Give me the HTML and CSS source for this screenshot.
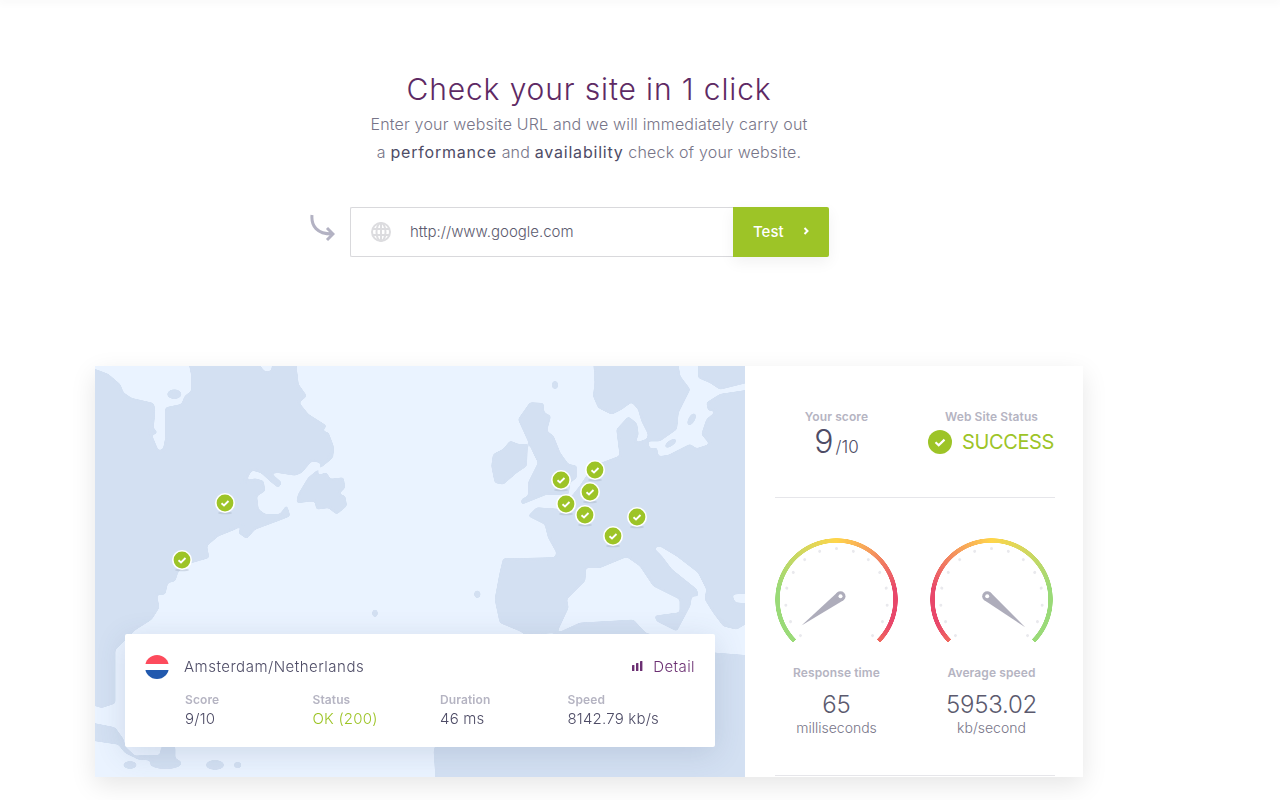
FILE: index.html
```html
<!DOCTYPE html>
<html lang="en">
<head>
    <meta charset="UTF-8">
    <meta name="viewport" content="width=device-width, initial-scale=1.0">
    <title>Check your site in 1 click</title>
    <link rel="stylesheet" href="styles.css">
</head>
<body>

<div class="top-edge"></div>

<div class="container">
    <h1>Check your site in 1 click</h1>
    <p class="intro">Enter your website URL and we will immediately carry out<br>a <strong>performance</strong> and <strong>availability</strong> check of your website.</p>

    <form class="search">
        <svg class="search-arrow" width="26" height="28" viewBox="0 0 26 28">
            <path d="M3 1C2 12 8 20 23 20M18 14l6 6-6 6" fill="none" stroke="#b3b2c3" stroke-width="3"/>
        </svg>
        <div class="search-box">
            <div class="search-field">
                <svg width="20" height="20" viewBox="0 0 20 20" fill="none" stroke="#dcdcdf" stroke-width="2">
                    <circle cx="10" cy="10" r="9"/>
                    <ellipse cx="10" cy="10" rx="4.5" ry="9"/>
                    <path d="M10 1v18M1.5 7h17M1.5 13h17"/>
                </svg>
                <input type="text" value="http://www.google.com">
            </div>
            <button type="button">Test
                <svg width="6" height="8" viewBox="0 0 6 8" fill="none" stroke="#fff" stroke-width="2"><path d="M1.5 1l3 3-3 3"/></svg>
            </button>
        </div>
    </form>

    <svg width="0" height="0" class="defs">
        <defs>
            <filter id="soften">
                <feGaussianBlur stdDeviation="1.6"/>
                <feComponentTransfer>
                    <feFuncA type="linear" slope="8" intercept="-3.5"/>
                </feComponentTransfer>
            </filter>
            <symbol id="pin" viewBox="0 0 22 22" overflow="visible">
                <ellipse cx="11" cy="21" rx="7" ry="1.3" fill="#9aa6b8" opacity=".35"/>
                <circle cx="11" cy="11" r="10" fill="#fff"/>
                <circle cx="11" cy="11" r="8.4" fill="#9dc427"/>
                <path d="M7.5 11.2l2.5 2.2 4.5-4.4" fill="none" stroke="#fff" stroke-width="1.9"/>
            </symbol>
            <symbol id="ticks" viewBox="-61.5 -61.5 123 123">
                <g fill="#e9e9ed">
                    <circle cy="-51" r="1.5" transform="rotate(-135)"/>
                    <circle cy="-51" r="1.5" transform="rotate(-115.7)"/>
                    <circle cy="-51" r="1.5" transform="rotate(-96.4)"/>
                    <circle cy="-51" r="1.5" transform="rotate(-77.1)"/>
                    <circle cy="-51" r="1.5" transform="rotate(-57.9)"/>
                    <circle cy="-51" r="1.5" transform="rotate(-38.6)"/>
                    <circle cy="-51" r="1.5" transform="rotate(-19.3)"/>
                    <circle cy="-51" r="1.5"/>
                    <circle cy="-51" r="1.5" transform="rotate(19.3)"/>
                    <circle cy="-51" r="1.5" transform="rotate(38.6)"/>
                    <circle cy="-51" r="1.5" transform="rotate(57.9)"/>
                    <circle cy="-51" r="1.5" transform="rotate(77.1)"/>
                    <circle cy="-51" r="1.5" transform="rotate(96.4)"/>
                    <circle cy="-51" r="1.5" transform="rotate(115.7)"/>
                    <circle cy="-51" r="1.5" transform="rotate(135)"/>
                </g>
            </symbol>
        </defs>
    </svg>

    <div class="card">
        <div class="map">
            <svg class="map-art" width="650" height="411" viewBox="0 0 650 411">
                <g class="land" filter="url(#soften)">
                    <!-- north america, drawn at 3x -->
                    <g transform="scale(.3333)">
                        <path d="M-30 5L0 10 40 25 75 55 85 80 110 97 175 112 180 130 175 190 165 195 190 255 205 250 212 215 212 125 260 115 270 90 290 75 290 30 278 -30 495 -30 495 0 510 18 530 15 535 -30 600 -30 610 55 635 90 612 110 640 145 695 180 680 195 700 200 715 240 715 265 680 290 650 285 620 320 600 328 550 320 505 322 470 312 455 340 425 352 480 338 505 345 510 375 485 390 490 430 510 445 555 445 575 418 585 450 555 462 480 490 455 518 430 500 445 475 420 490 370 510 335 540 342 575 290 590 250 615 240 645 218 650 210 685 185 685 192 725 170 760 120 792 60 852 60 1012 20 1025 -30 1010Z"/>
                        <path d="M500 322L535 328 560 350 550 365 525 345Z"/>
                        <path d="M680 288L720 270 640 335 610 385 605 410 660 405 665 430 700 425 725 445 755 420 750 390 730 385 750 365 745 335 705 340 695 320 665 330Z"/>
                        <ellipse cx="238" cy="85" rx="22" ry="15"/>
                        <circle cx="178" cy="198" r="8"/>
                        <ellipse cx="840" cy="742" rx="9" ry="12"/>
                        <path d="M-30 1067L60 1085 85 1120 90 1142 120 1170 195 1168 200 1142 240 1142 240 1180 200 1185 130 1180 90 1160 70 1135 -30 1120Z"/>
                        <ellipse cx="105" cy="1197" rx="21" ry="12"/>
                        <ellipse cx="212" cy="1192" rx="48" ry="18"/>
                        <ellipse cx="360" cy="1197" rx="28" ry="15"/>
                        <ellipse cx="428" cy="1197" rx="12" ry="10"/>
                        <ellipse cx="460" cy="1233" rx="5" ry="4"/>
                    </g>
                    <!-- europe, drawn at 3x -->
                    <g transform="translate(325 0) scale(.3333)">
                        <path d="M520 -30L525 50 520 90 535 125 575 145 605 130 635 108 655 130 665 165 685 205 680 225 720 225 770 190 775 140 810 70 780 30 770 -30Z"/>
                        <path d="M835 -30L1000 -30 1000 45 900 70 870 50 835 35Z"/>
                        <path d="M600 270L590 190 625 152 650 172 655 205 645 232 680 220 690 250 710 245 715 272 745 268 810 235 830 248 870 235 845 205 860 160 890 135 865 133 860 110 900 85 1000 70 1000 680 935 685 945 710 1000 715 1000 760 950 790 910 780 880 740 855 700 860 670 835 620 770 570 720 540 700 545 725 570 755 610 830 670 835 690 815 690 810 720 770 795 710 765 705 750 780 740 780 700 700 660 660 600 620 572 540 605 497 605 495 645 440 700 445 725 410 800 315 805 300 795 240 770 225 700 240 620 250 578 405 575 410 560 385 515 375 475 325 450 350 425 420 430 460 385 480 360 520 300 560 285Z"/>
                        <path d="M330 110L370 112 372 140 392 150 380 195 400 210 420 260 445 295 470 300 470 335 450 350 445 385 380 385 305 415 305 400 325 390 325 350 355 290 340 260 320 215 295 160Z"/>
                        <path d="M220 265L250 250 270 225 295 235 322 235 320 300 290 320 250 355 225 350 215 300Z"/>
                        <ellipse cx="405" cy="57" rx="10" ry="13"/>
                        <ellipse cx="172" cy="685" rx="10" ry="12"/>
                        <ellipse cx="815" cy="160" rx="10" ry="21" transform="rotate(30 815 160)"/>
                        <ellipse cx="752" cy="232" rx="21" ry="9" transform="rotate(-35 752 232)"/>
                        <path d="M415 805L480 775 640 765 675 805Z"/>
                    </g>
                    <path d="M463 268L485 258 538 255 550 268 620 288 670 292 670 430 343 430 340 385 345 370Z"/>
                </g>
                <use href="#pin" x="119" y="126" width="22" height="22"/>
                <use href="#pin" x="76" y="183" width="22" height="22"/>
                <use href="#pin" x="455" y="103" width="22" height="22"/>
                <use href="#pin" x="489" y="93" width="22" height="22"/>
                <use href="#pin" x="484" y="115" width="22" height="22"/>
                <use href="#pin" x="460" y="127" width="22" height="22"/>
                <use href="#pin" x="479" y="138" width="22" height="22"/>
                <use href="#pin" x="531" y="140" width="22" height="22"/>
                <use href="#pin" x="507" y="159" width="22" height="22"/>
            </svg>

            <div class="location">
                <div class="location-head">
                    <span class="flag"></span>
                    <span class="location-name">Amsterdam/Netherlands</span>
                    <a class="detail" href="#">
                        <svg width="11" height="10" viewBox="0 0 11 10" fill="#6b2f72"><rect y="4" width="2.4" height="6" rx=".6"/><rect x="4" y="2" width="2.4" height="8" rx=".6"/><rect x="8" width="2.4" height="10" rx=".6"/></svg>
                        Detail
                    </a>
                </div>
                <div class="location-stats">
                    <div><span class="label">Score</span><span class="val">9/10</span></div>
                    <div><span class="label">Status</span><span class="val ok">OK (200)</span></div>
                    <div><span class="label">Duration</span><span class="val">46 ms</span></div>
                    <div><span class="label">Speed</span><span class="val">8142.79 kb/s</span></div>
                </div>
            </div>
        </div>

        <div class="side">
            <div class="summary">
                <div class="summary-col">
                    <span class="label">Your score</span>
                    <div class="score"><b>9</b>/10</div>
                </div>
                <div class="summary-col">
                    <span class="label">Web Site Status</span>
                    <div class="status">
                        <svg width="24" height="24" viewBox="0 0 24 24"><circle cx="12" cy="12" r="12" fill="#9dc427"/><path d="M7.5 12.2l3.2 3 5.8-5.6" fill="none" stroke="#fff" stroke-width="2.2"/></svg>
                        SUCCESS
                    </div>
                </div>
            </div>
            <div class="rule"></div>
            <div class="metrics">
                <div class="metric">
                    <div class="gauge gauge-time">
                        <svg viewBox="-61.5 -61.5 123 123">
                            <use href="#ticks" x="-61.5" y="-61.5" width="123" height="123"/>
                            <polygon points="-35,26 7,0.7 1,-7.3" fill="#aeadbb"/>
                            <circle cx="4" cy="-3.3" r="5" fill="#aeadbb"/>
                            <circle cx="4" cy="-3.3" r="2" fill="#fff"/>
                        </svg>
                    </div>
                    <span class="label">Response time</span>
                    <div class="metric-val">65</div>
                    <div class="metric-unit">milliseconds</div>
                </div>
                <div class="metric">
                    <div class="gauge gauge-speed">
                        <svg viewBox="-61.5 -61.5 123 123">
                            <use href="#ticks" x="-61.5" y="-61.5" width="123" height="123"/>
                            <polygon points="33.7,27.7 -7.5,0.6 -1.1,-7.2" fill="#aeadbb"/>
                            <circle cx="-4.3" cy="-3.3" r="5" fill="#aeadbb"/>
                            <circle cx="-4.3" cy="-3.3" r="2" fill="#fff"/>
                        </svg>
                    </div>
                    <span class="label">Average speed</span>
                    <div class="metric-val">5953.02</div>
                    <div class="metric-unit">kb/second</div>
                </div>
            </div>
            <div class="rule rule-bottom"></div>
        </div>
    </div>
</div>

</body>
</html>
```

FILE: styles.css
```css
* {
    box-sizing: border-box;
}
body {
    font-family: Inter, "Open Sans", sans-serif;
    margin: 0;
    background-color: #fff;
    color: #4e4c66;
    height: 800px;
    overflow: hidden;
}
.top-edge {
    height: 0;
    box-shadow: 0 0 8px 2px rgba(0, 0, 0, 0.05);
}
.container {
    width: 988px;
    margin-left: 95px;
}
.defs {
    display: block;
    position: absolute;
}
h1 {
    margin: 71px 0 0;
    font-size: 30px;
    line-height: 36px;
    font-weight: 300;
    letter-spacing: 0.87px;
    color: #5e2a64;
    text-align: center;
}
.intro {
    margin: 3px 0 0;
    font-size: 16px;
    line-height: 28px;
    font-weight: 300;
    letter-spacing: 0.18px;
    color: #777588;
    text-align: center;
}
.intro strong {
    font-weight: 400;
    letter-spacing: 0.8px;
    color: #4e4c66;
}

.search {
    display: flex;
    gap: 15px;
    margin: 41px 0 0 214px;
}
.search-arrow {
    margin-top: 7px;
}
.search-box {
    display: flex;
    width: 479px;
    height: 50px;
}
.search-field {
    flex: 1;
    display: flex;
    align-items: center;
    gap: 19px;
    padding-left: 20px;
    border: 1px solid #d9d9dc;
    border-right: none;
    border-radius: 2px 0 0 2px;
}
.search-field input {
    flex: 1;
    min-width: 0;
    border: none;
    outline: none;
    padding: 0 0 2px;
    font: 300 15px Inter, sans-serif;
    color: #5b5a6e;
}
.search-box button {
    width: 96px;
    display: flex;
    align-items: center;
    justify-content: space-between;
    padding: 0 20px 2px;
    border: none;
    border-radius: 0 2px 2px 0;
    background-color: #9dc427;
    color: #fff;
    font: 500 15px Inter, sans-serif;
    box-shadow: 0 5px 15px rgba(0, 0, 0, 0.06);
}

.card {
    display: flex;
    height: 411px;
    margin-top: 109px;
    background-color: #fff;
    box-shadow: 0 8px 24px rgba(0, 0, 0, 0.1);
}
.map {
    position: relative;
    width: 650px;
    background-color: #eaf3ff;
    overflow: hidden;
}
.map-art {
    display: block;
}
.land {
    fill: #d3e0f2;
}
.land path {
    stroke: #d3e0f2;
    stroke-width: 3;
    stroke-linejoin: round;
}
.location {
    position: absolute;
    left: 30px;
    bottom: 30px;
    width: 590px;
    height: 113px;
    padding: 21px 20px 0 20px;
    background-color: #fff;
    border-radius: 2px;
    box-shadow: 0 6px 30px rgba(60, 80, 120, 0.16);
}
.location-head {
    display: flex;
    align-items: center;
    height: 24px;
}
.flag {
    width: 24px;
    height: 24px;
    border-radius: 50%;
    background: linear-gradient(#fd4b5c 0 36%, #fff 36% 64%, #2159ae 64%);
}
.location-name {
    flex: 1;
    margin: 0 0 2px 15px;
    font-size: 15px;
    font-weight: 300;
    letter-spacing: 0.5px;
}
.detail {
    display: flex;
    align-items: center;
    gap: 10px;
    margin-bottom: 2px;
    font-size: 15px;
    font-weight: 300;
    letter-spacing: 0.4px;
    color: #6b2f72;
    text-decoration: none;
}
.location-stats {
    display: grid;
    grid-template-columns: repeat(4, 127.5px);
    margin: 13px 0 0 40px;
}
.label {
    display: block;
    font-size: 12px;
    line-height: 16px;
    font-weight: 600;
    letter-spacing: 0.1px;
    color: #b5b4c2;
}
.val {
    display: block;
    margin-top: 1px;
    font-size: 15px;
    line-height: 20px;
    font-weight: 300;
    letter-spacing: 0.2px;
}
.val.ok {
    color: #9dc427;
}

.side {
    flex: 1;
    padding-top: 43px;
    position: relative;
}
.summary,
.metrics {
    display: grid;
    grid-template-columns: 155px 155px;
    padding-left: 14px;
    text-align: center;
}
.score {
    height: 33px;
    font-size: 17px;
    line-height: 33px;
    font-weight: 300;
}
.score b {
    font-size: 32px;
    font-weight: 300;
    margin-right: 2px;
}
.status {
    display: flex;
    align-items: center;
    justify-content: center;
    gap: 10px;
    height: 33px;
    padding-right: 1px;
    font-size: 20px;
    font-weight: 400;
    letter-spacing: -0.4px;
    color: #9dc427;
}
.rule {
    height: 1px;
    margin: 39px 28px 0 30px;
    background-color: #e6e6ea;
}
.rule-bottom {
    margin-top: 38px;
}
.metrics {
    margin-top: 40px;
}
.metric {
    display: flex;
    flex-direction: column;
    align-items: center;
}
.gauge {
    position: relative;
    width: 123px;
    height: 123px;
    margin-bottom: 4px;
}
.gauge::before {
    content: "";
    position: absolute;
    inset: 0;
    -webkit-mask: radial-gradient(circle, transparent 56.5px, #000 57px, #000 61px, transparent 61.5px);
    mask: radial-gradient(circle, transparent 56.5px, #000 57px, #000 61px, transparent 61.5px);
}
.gauge-time::before {
    background: conic-gradient(from 225deg, #9ada78 0deg, #9ada78 55deg, #ffd54a 135deg, #f7a35a 165deg, #e8476a 215deg, #e8476a 250deg, #f0695e 270deg, transparent 270deg);
}
.gauge-speed::before {
    background: conic-gradient(from 225deg, #f0695e 0deg, #e8476a 20deg, #e8476a 55deg, #f7a35a 105deg, #ffd54a 135deg, #9ada78 215deg, #9ada78 270deg, transparent 270deg);
}
.gauge svg {
    position: absolute;
    inset: 0;
    width: 123px;
    height: 123px;
}
.metric-val {
    margin-top: 9px;
    font-size: 24px;
    line-height: 29px;
    font-weight: 300;
    letter-spacing: -0.2px;
    color: #5b5a6e;
}
.metric-unit {
    font-size: 14px;
    line-height: 18px;
    font-weight: 300;
    color: #777588;
}
```
